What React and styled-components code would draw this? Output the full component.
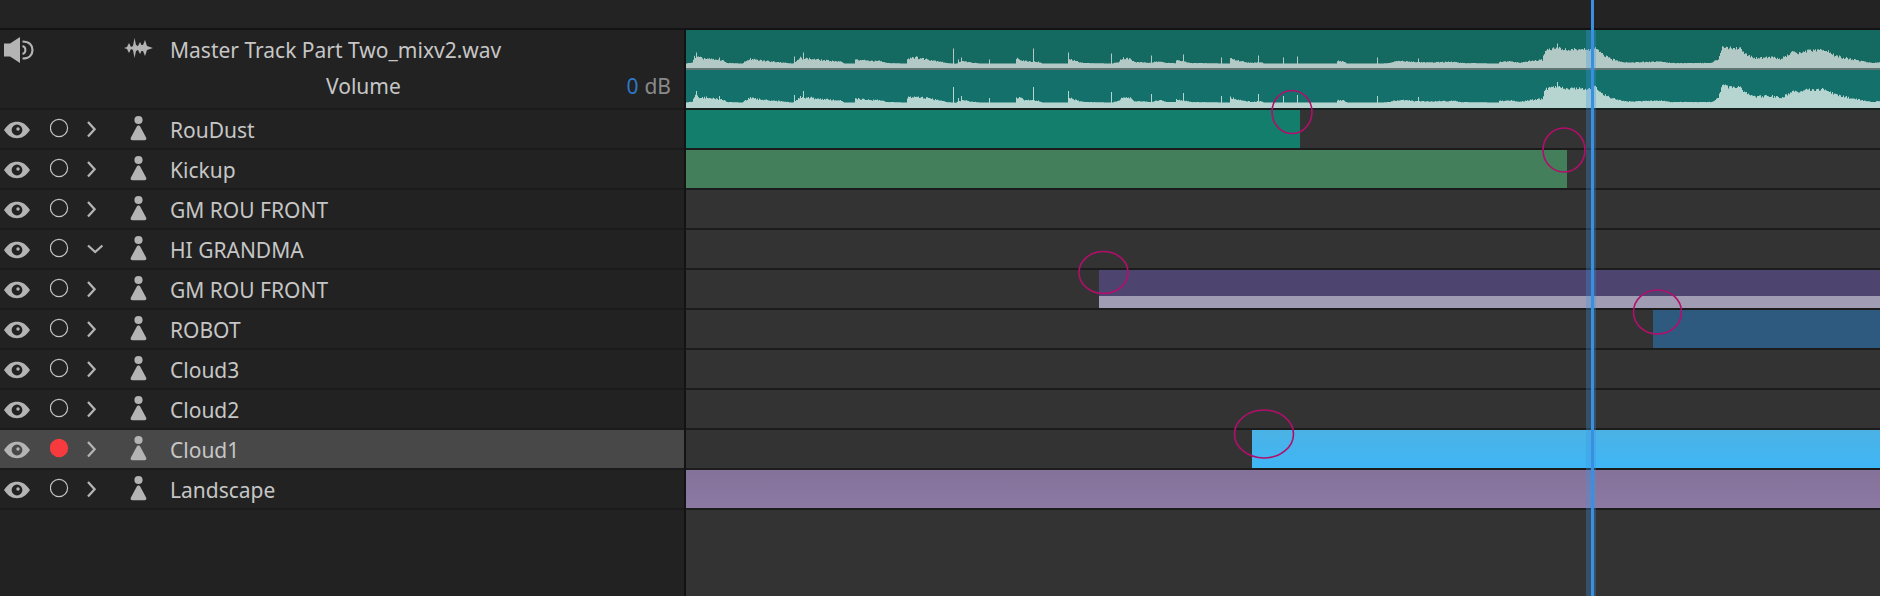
import React from 'react';
import styled, { createGlobalStyle } from 'styled-components';

const Global = createGlobalStyle`
  html, body { margin: 0; padding: 0; background: #222; }
  body { font-family: "Noto Sans", "Open Sans", sans-serif; }
`;

const Root = styled.div`
  position: relative;
  width: 1880px;
  height: 596px;
  overflow: hidden;
  display: flex;
  flex-direction: column;
  background: #222;
`;
const TopBar = styled.div`
  height: 28px;
  flex: none;
  background: #232323;
  border-bottom: 2px solid #131313;
`;
const Body = styled.div`
  flex: 1;
  display: flex;
  min-height: 0;
`;
const Headers = styled.div`
  width: 684px;
  flex: none;
  background: #222;
  border-right: 2px solid #131313;
  display: flex;
  flex-direction: column;
`;
const Timeline = styled.div`
  flex: 1;
  min-width: 0;
  background: #333;
  display: flex;
  flex-direction: column;
`;
const MasterHeader = styled.div`
  height: 78px;
  border-bottom: 2px solid #1b1b1b;
  display: grid;
  grid-template-columns: 120px 46px 1fr;
  grid-template-rows: 38px 40px;
  padding-left: 4px;
  padding-right: 13px;
  align-items: center;
`;
const VolumeLine = styled.div`
  grid-column: 1 / -1;
  display: flex;
  justify-content: space-between;
  padding-left: 322px;
  padding-bottom: 6px;
`;
const Label = styled.span`
  display: block;
  padding-top: 2px;
  font-size: 21px;
  line-height: 28px;
  color: #c6c6c6;
  white-space: nowrap;
`;
const Value = styled.span`
  display: block;
  padding-top: 2px;
  font-size: 21px;
  line-height: 28px;
  color: #8a8a8a;
  white-space: nowrap;
  b { font-weight: 400; color: #2f78c8; margin-right: 6px; }
`;
const TrackRow = styled.div`
  height: 38px;
  border-bottom: 2px solid #1b1b1b;
  background: ${p => (p.$selected ? '#484848' : 'transparent')};
  display: grid;
  grid-template-columns: 46px 37px 43px 40px 1fr;
  padding-left: 4px;
  align-items: center;
`;
const Icon = styled.svg`
  display: block;
  fill: #b4b4b4;
`;
const Lane = styled.div`
  height: 38px;
  flex: none;
  border-bottom: 2px solid #1c1c1c;
  display: flex;
`;
const Clip = styled.div`
  margin-left: ${p => p.$start}px;
  width: ${p => (p.$width ? `${p.$width}px` : 'auto')};
  flex: ${p => (p.$width ? 'none' : '1')};
  background: ${p => p.$bg};
`;
const StackedClip = styled(Clip)`
  display: flex;
  flex-direction: column;
`;
const ClipBody = styled.div`
  height: 26px;
  background: #4d4570;
`;
const ClipFoot = styled.div`
  height: 12px;
  background: #a09cb4;
`;
const MasterLane = styled.div`
  height: 78px;
  flex: none;
  border-bottom: 2px solid #17201f;
`;
const Wave = styled.svg`
  display: block;
`;
const PlayBand = styled.div`
  position: absolute;
  left: 1586px;
  top: 30px;
  bottom: 0;
  width: 10px;
  background: rgba(60, 150, 225, 0.3);
`;
const PlayLine = styled.div`
  position: absolute;
  left: 1591px;
  top: 0;
  bottom: 0;
  width: 3px;
  background: #3a90e0;
`;
const Marks = styled.svg`
  position: absolute;
  left: 0;
  top: 0;
  pointer-events: none;
`;

const EyeIcon = ({ bg }) => (
  <Icon width="26" height="38" viewBox="0 0 26 38">
    <path fillRule="evenodd" d="M0 20C4 14 8 11.8 13 11.8S22 14 26 20C22 26 18 28.2 13 28.2S4 26 0 20ZM13 14.6A5.4 5.4 0 1 0 13 25.4A5.4 5.4 0 1 0 13 14.6Z" />
    <circle cx="14" cy="19" r="1.7" />
  </Icon>
);
const RecIcon = ({ on }) => (
  <Icon width="20" height="38" viewBox="0 0 20 38">
    {on
      ? <circle cx="9" cy="18" r="9.2" fill="#f63a3e" />
      : <circle cx="9" cy="18" r="8.6" fill="none" stroke="#c4c4c4" strokeWidth="1.2" />}
  </Icon>
);
const ChevronIcon = ({ open }) => (
  <Icon width="18" height="38" viewBox="0 0 18 38">
    {open
      ? <path d="M1 15.5L8.2 22L15.4 15.5" fill="none" stroke="#b4b4b4" strokeWidth="2.2" />
      : <path d="M1 12L7.6 19.3L1 26.6" fill="none" stroke="#b4b4b4" strokeWidth="2.3" />}
  </Icon>
);
const PersonIcon = () => (
  <Icon width="17" height="38" viewBox="0 0 17 38">
    <circle cx="8.5" cy="10" r="4.1" />
    <path d="M8.5 15.5C9.5 15.5 10 16 10.6 17.2L16.2 27.7C16.8 29 16 30.2 14.6 30.2H2.4C1 30.2 .2 29 .8 27.7L6.4 17.2C7 16 7.5 15.5 8.5 15.5Z" />
  </Icon>
);
const SpeakerIcon = () => (
  <Icon width="30" height="38" viewBox="0 0 30 38">
    <path d="M0 13.5H6L16 7V33L6 26.5H0Z" />
    <path d="M18.5 16A4.2 4.2 0 0 1 18.5 24" fill="none" stroke="#b4b4b4" strokeWidth="2" />
    <path d="M18.5 11.5C25.5 11.5 28.5 15.5 28.5 20C28.5 24.5 25.5 28.5 18.5 28.5" fill="none" stroke="#b4b4b4" strokeWidth="2.2" />
  </Icon>
);
const WaveIcon = () => (
  <Icon width="29" height="38" viewBox="0 0 29 38">
    <path d="M0 18L3 17L5 13L7 17L9 16L10.5 8L12 15L14 16L16 12L17.5 15L19 15L21 10L23 16L26 17L29 18L26 19L23 20L21 26L19 21L17.5 21L16 24L14 20L12 21L10.5 28L9 20L7 19L5 23L3 19Z" />
  </Icon>
);

const ENV = [
  [686, .5], [692, 1.5], [694, 7], [700, 6], [712, 4.5], [722, 3.5], [727, 1], [742, .5], [744, 2], [749, 5], [756, 4], [766, 3], [778, 2], [792, .5], [794, 1], [800, 6], [812, 5], [826, 3.5], [840, 2.5], [844, .5], [854, .5], [855, 4], [860, 4], [870, 3], [880, 3], [886, 1], [906, .5], [907, 5], [912, 7], [925, 5], [940, 2.5], [946, 1],
  [955, .3], [963, 3], [970, 1.5], [980, .5], [1015, .5], [1016, 6], [1025, 3], [1038, 2], [1042, .5], [1068, .5], [1069, 5], [1075, 3], [1083, 1], [1112, .5], [1118, 2], [1122, 6], [1130, 5], [1134, 2], [1145, 1.5], [1150, 1], [1160, 3], [1166, 1], [1175, 1], [1176, 4], [1180, 3], [1190, 1],
  [1229, .5], [1230, 6], [1235, 4], [1245, 2], [1252, 1], [1260, 2], [1264, .5], [1336, .5], [1337, 3], [1343, 2.5], [1347, .5], [1381, .5], [1390, 1], [1392, 2], [1400, 3], [1415, 2], [1430, 1.5], [1440, 2], [1455, 2], [1460, 1],
  [1498, .5], [1499, 2], [1510, 2.5], [1520, 1.2], [1530, 3], [1542, 4], [1545, 14], [1550, 15], [1557, 16], [1567, 14], [1580, 15], [1588, 14], [1595, 16], [1600, 11], [1610, 5], [1623, 2], [1630, 1.5], [1660, 2.5], [1670, 1],
  [1710, 1], [1712, 1.5], [1718, 5], [1722, 18], [1728, 16], [1740, 16], [1745, 10], [1755, 6], [1770, 7], [1780, 5], [1790, 10], [1793, 13], [1800, 10], [1806, 13], [1825, 14], [1835, 8], [1845, 6], [1860, 3], [1872, 1], [1880, 2],
];
const SPIKES = [[696, 11], [719, 6], [794, 7], [803, 11], [953, 15], [958, 4], [961, 6], [989, 4], [1033, 15], [1068, 11], [1111, 10], [1151, 8], [1183, 9], [1221, 6], [1258, 8], [1283, 6], [1297, 7], [1377, 6], [1418, 5], [1557, 20]];

const envAt = x => {
  for (let i = 1; i < ENV.length; i++) {
    if (x <= ENV[i][0]) {
      const [a, h1] = ENV[i - 1];
      const [b, h2] = ENV[i];
      return h1 + ((h2 - h1) * (x - a)) / (b - a);
    }
  }
  return 1;
};
const noise = (x, seed) => {
  const v = Math.sin(x * 12.9898 + seed * 78.233) * 43758.5453;
  return v - Math.floor(v);
};
const wavePath = (seed, base) => {
  let d = `M0 ${base}`;
  for (let x = 686; x < 1880; x++) {
    const spike = SPIKES.find(s => s[0] === x);
    const e = envAt(x);
    const h = spike ? spike[1] + seed * .5 : e + (e > .8 ? (noise(x, seed) - .5) * Math.min(3, e * .45) : 0);
    d += `H${x - 686}V${(base - h).toFixed(1)}H${x - 685}`;
  }
  return `${d}V${base}Z`;
};

const MasterWave = () => (
  <Wave width="1194" height="78" viewBox="0 0 1194 78">
    <rect width="1194" height="38" fill="#146a60" />
    <rect y="38" width="1194" height="2" fill="#5f7471" />
    <rect y="40" width="1194" height="38" fill="#14706a" />
    <path d={wavePath(1, 34)} fill="#b3c9c5" />
    <rect y="34" width="1194" height="4" fill="#b3c9c5" />
    <path d={wavePath(2, 73)} fill="#b6d5d1" />
    <rect y="73" width="1194" height="5" fill="#b6d5d1" />
  </Wave>
);

const TRACKS = [
  { name: 'RouDust', clip: { start: 0, width: 614, bg: '#137e6c' } },
  { name: 'Kickup', clip: { start: 0, width: 881, bg: '#447f5b' } },
  { name: 'GM ROU FRONT' },
  { name: 'HI GRANDMA', open: true },
  { name: 'GM ROU FRONT', stacked: { start: 413 } },
  { name: 'ROBOT', clip: { start: 967, bg: '#2f5a80' } },
  { name: 'Cloud3' },
  { name: 'Cloud2' },
  { name: 'Cloud1', selected: true, rec: true, clip: { start: 566, bg: 'linear-gradient(#4bb2e4, #3fb6f6)' } },
  { name: 'Landscape', clip: { start: 0, bg: 'linear-gradient(#84729a, #8c79a4)' } },
];

const RINGS = [
  [1292, 112, 20, 21.5],
  [1564, 150, 21, 22],
  [1103.5, 272.5, 24.5, 21],
  [1657.5, 312, 24, 22],
  [1264, 434, 29.5, 24],
];

export default function App() {
  return (
    <Root>
      <Global />
      <TopBar />
      <Body>
        <Headers>
          <MasterHeader>
            <SpeakerIcon />
            <WaveIcon />
            <Label>Master Track Part Two_mixv2.wav</Label>
            <VolumeLine>
              <Label>Volume</Label>
              <Value><b>0</b>dB</Value>
            </VolumeLine>
          </MasterHeader>
          {TRACKS.map((t, i) => (
            <TrackRow key={i} $selected={t.selected}>
              <EyeIcon />
              <RecIcon on={t.rec} />
              <ChevronIcon open={t.open} />
              <PersonIcon />
              <Label>{t.name}</Label>
            </TrackRow>
          ))}
        </Headers>
        <Timeline>
          <MasterLane><MasterWave /></MasterLane>
          {TRACKS.map((t, i) => (
            <Lane key={i}>
              {t.clip && <Clip $start={t.clip.start} $width={t.clip.width} $bg={t.clip.bg} />}
              {t.stacked && (
                <StackedClip $start={t.stacked.start}>
                  <ClipBody />
                  <ClipFoot />
                </StackedClip>
              )}
            </Lane>
          ))}
        </Timeline>
      </Body>
      <PlayBand />
      <PlayLine />
      <Marks width="1880" height="596" viewBox="0 0 1880 596">
        {RINGS.map(([cx, cy, rx, ry], i) => (
          <ellipse key={i} cx={cx} cy={cy} rx={rx} ry={ry} fill="none" stroke="#b30e6b" strokeWidth="1.6" />
        ))}
      </Marks>
    </Root>
  );
}
